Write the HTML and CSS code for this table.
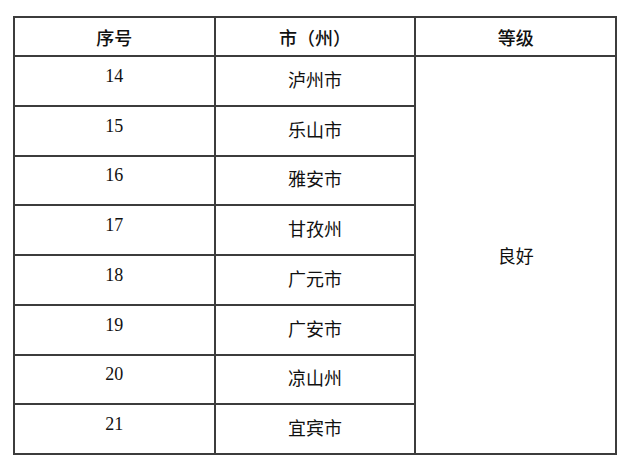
FILE: index.html
```html
<!DOCTYPE html>
<html lang="zh">
<head>
<meta charset="utf-8">
<link rel="stylesheet" href="styles.css">
</head>
<body>
<table class="grade-table">
  <thead>
    <tr class="head-row">
      <th>序号</th>
      <th>市（州）</th>
      <th>等级</th>
    </tr>
  </thead>
  <tbody>
    <tr><td class="num">14</td><td class="city">泸州市</td><td class="grade" rowspan="8">良好</td></tr>
    <tr><td class="num">15</td><td class="city">乐山市</td></tr>
    <tr><td class="num">16</td><td class="city">雅安市</td></tr>
    <tr><td class="num">17</td><td class="city">甘孜州</td></tr>
    <tr><td class="num">18</td><td class="city">广元市</td></tr>
    <tr><td class="num">19</td><td class="city">广安市</td></tr>
    <tr><td class="num">20</td><td class="city">凉山州</td></tr>
    <tr><td class="num">21</td><td class="city">宜宾市</td></tr>
  </tbody>
</table>
</body>
</html>
```
FILE: styles.css
```css
html, body {
  margin: 0;
  padding: 0;
  background: #ffffff;
}
body {
  padding: 16px 0 0 13px;
  font-family: "Liberation Serif", "Noto Sans CJK SC", serif;
  color: #111;
}
.grade-table {
  border-collapse: collapse;
  table-layout: fixed;
  width: 604px;
}
.grade-table th,
.grade-table td {
  border: 2px solid #3c3c3c;
  text-align: center;
  padding: 0;
  font-size: 18px;
}
.grade-table th {
  font-family: "Noto Sans CJK SC", sans-serif;
  font-weight: 500;
  height: 37px;
  vertical-align: middle;
  width: 33.33%;
}
.grade-table tbody tr {
  height: 49.75px;
}
.num {
  font-family: "Liberation Serif", serif;
  font-size: 19px;
  vertical-align: middle;
  padding-bottom: 9px !important;
}
.city {
  font-family: "Noto Sans CJK SC", sans-serif;
  font-weight: 400;
  vertical-align: middle;
  padding-bottom: 4px !important;
}
.grade {
  font-family: "Noto Sans CJK SC", sans-serif;
  vertical-align: middle;
}
```
